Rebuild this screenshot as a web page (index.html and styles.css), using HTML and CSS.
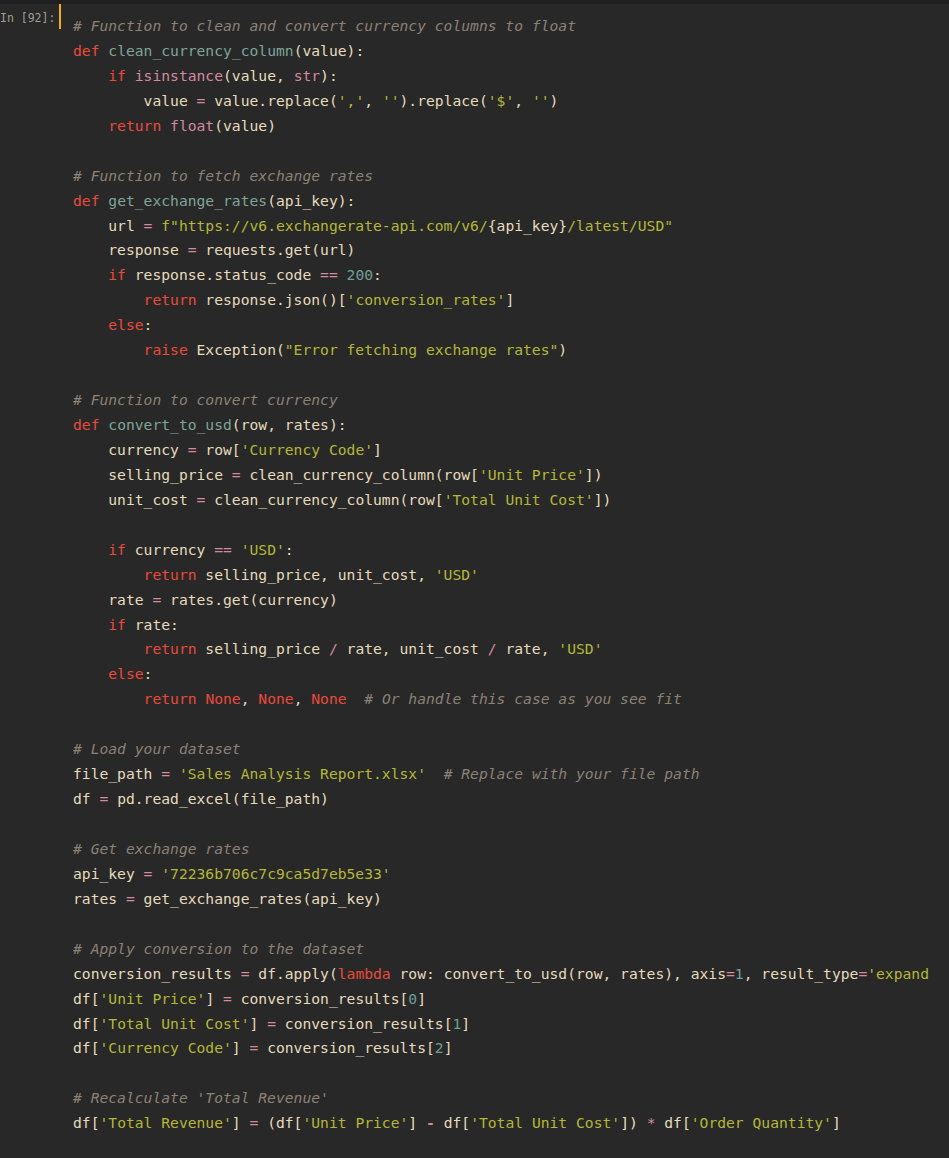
FILE: index.html
```html
<!DOCTYPE html>
<html lang="en">
<head>
<meta charset="utf-8">
<title>Notebook cell</title>
<link rel="stylesheet" href="styles.css">
</head>
<body>
<div class="topbar"></div>
<div class="cell">
  <div class="prompt">In [92]:</div>
  <div class="marker"></div>
  <div class="input">
<pre class="code"><span class="c"># Function to clean and convert currency columns to float</span>
<span class="k">def</span> <span class="nf">clean_currency_column</span>(value):
    <span class="k">if</span> <span class="nb">isinstance</span>(value, <span class="nb">str</span>):
        value <span class="o">=</span> value.replace(<span class="s">','</span>, <span class="s">''</span>).replace(<span class="s">'$'</span>, <span class="s">''</span>)
    <span class="k">return</span> <span class="nb">float</span>(value)

<span class="c"># Function to fetch exchange rates</span>
<span class="k">def</span> <span class="nf">get_exchange_rates</span>(api_key):
    url <span class="o">=</span> <span class="s">f"https://v6.exchangerate-api.com/v6/</span>{api_key}<span class="s">/latest/USD"</span>
    response <span class="o">=</span> requests.get(url)
    <span class="k">if</span> response.status_code <span class="o">==</span> <span class="m">200</span>:
        <span class="k">return</span> response.json()[<span class="s">'conversion_rates'</span>]
    <span class="k">else</span>:
        <span class="k">raise</span> Exception(<span class="s">"Error fetching exchange rates"</span>)

<span class="c"># Function to convert currency</span>
<span class="k">def</span> <span class="nf">convert_to_usd</span>(row, rates):
    currency <span class="o">=</span> row[<span class="s">'Currency Code'</span>]
    selling_price <span class="o">=</span> clean_currency_column(row[<span class="s">'Unit Price'</span>])
    unit_cost <span class="o">=</span> clean_currency_column(row[<span class="s">'Total Unit Cost'</span>])

    <span class="k">if</span> currency <span class="o">==</span> <span class="s">'USD'</span>:
        <span class="k">return</span> selling_price, unit_cost, <span class="s">'USD'</span>
    rate <span class="o">=</span> rates.get(currency)
    <span class="k">if</span> rate:
        <span class="k">return</span> selling_price <span class="o">/</span> rate, unit_cost <span class="o">/</span> rate, <span class="s">'USD'</span>
    <span class="k">else</span>:
        <span class="k">return</span> <span class="k">None</span>, <span class="k">None</span>, <span class="k">None</span>  <span class="c"># Or handle this case as you see fit</span>

<span class="c"># Load your dataset</span>
file_path <span class="o">=</span> <span class="s">'Sales Analysis Report.xlsx'</span>  <span class="c"># Replace with your file path</span>
df <span class="o">=</span> pd.read_excel(file_path)

<span class="c"># Get exchange rates</span>
api_key <span class="o">=</span> <span class="s">'72236b706c7c9ca5d7eb5e33'</span>
rates <span class="o">=</span> get_exchange_rates(api_key)

<span class="c"># Apply conversion to the dataset</span>
conversion_results <span class="o">=</span> df.apply(<span class="k">lambda</span> row: convert_to_usd(row, rates), axis<span class="o">=</span><span class="m">1</span>, result_type<span class="o">=</span><span class="s">'expand'</span>)
df[<span class="s">'Unit Price'</span>] <span class="o">=</span> conversion_results[<span class="m">0</span>]
df[<span class="s">'Total Unit Cost'</span>] <span class="o">=</span> conversion_results[<span class="m">1</span>]
df[<span class="s">'Currency Code'</span>] <span class="o">=</span> conversion_results[<span class="m">2</span>]

<span class="c"># Recalculate 'Total Revenue'</span>
df[<span class="s">'Total Revenue'</span>] <span class="o">=</span> (df[<span class="s">'Unit Price'</span>] <span class="o minus">-</span> df[<span class="s">'Total Unit Cost'</span>]) <span class="o">*</span> df[<span class="s">'Order Quantity'</span>]</pre>
  </div>
</div>
</body>
</html>
```

FILE: styles.css
```css
html, body {
  margin: 0;
  padding: 0;
  background: #282828;
}

body {
  min-height: 1158px;
  font-family: "DejaVu Sans Mono", "Liberation Mono", monospace;
  color: #e6dbbc;
}

.topbar {
  height: 4px;
  background: #1e2022;
}

.cell {
  display: flex;
  align-items: flex-start;
}

.prompt {
  width: 59px;
  flex: 0 0 59px;
  font-size: 11.5px;
  line-height: 14px;
  padding-top: 7px;
  color: #a09d95;
  white-space: nowrap;
}

.marker {
  width: 2px;
  height: 25px;
  flex: 0 0 2px;
  background: #f2ac29;
}

.input {
  flex: 1;
  min-width: 0;
  margin-right: 19px;
  overflow: hidden;
}

.code {
  margin: 0;
  padding: 10px 0 19px 12px;
  font-family: "DejaVu Sans Mono", "Liberation Mono", monospace;
  font-size: 14.67px;
  line-height: 24.93px;
  white-space: pre;
  color: #e6dbbc;
}

.c { color: #8c8175; font-style: italic; }
.k { color: #ea4a3b; }
.nf { color: #7fa598; }
.nb { color: #d38b9e; }
.s { color: #b5b738; }
.m { color: #6f9f96; }
.o { color: #d38b9e; }
.minus { font-weight: bold; }
```
